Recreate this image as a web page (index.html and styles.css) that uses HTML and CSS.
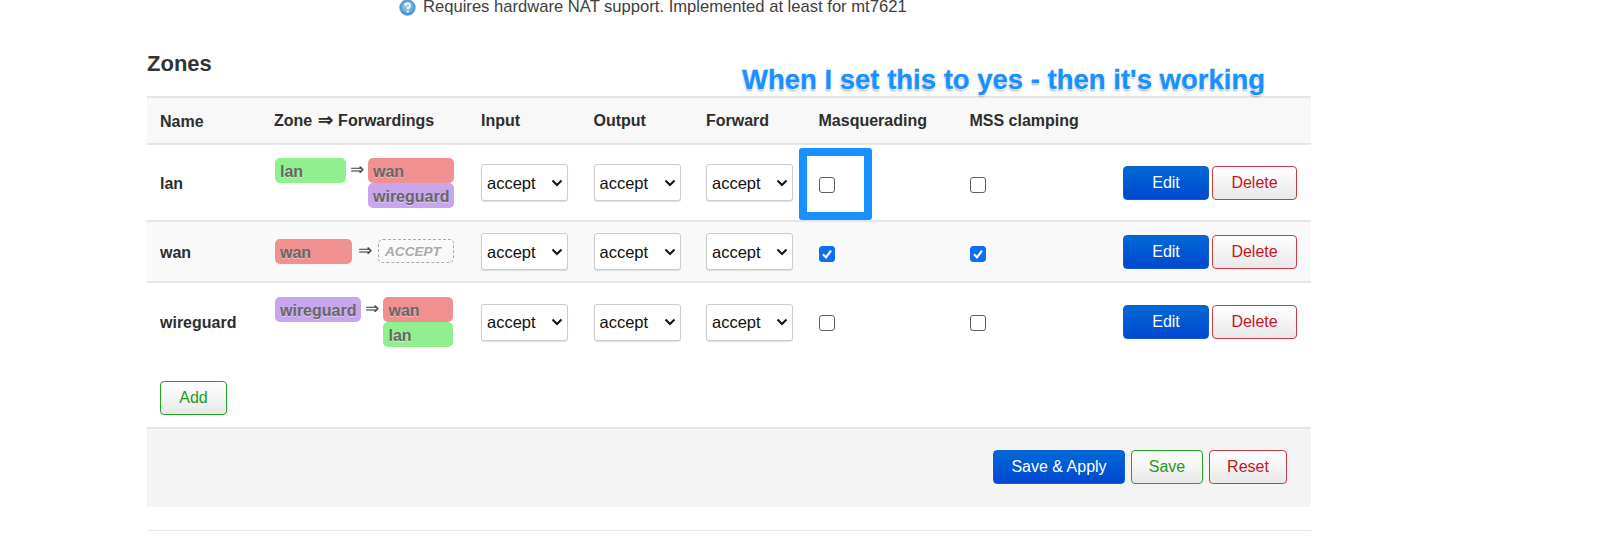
FILE: index.html
```html
<!DOCTYPE html>
<html lang="en">
<head>
<meta charset="utf-8">
<title>Zones</title>
<link rel="stylesheet" href="styles.css">
</head>
<body>
<div class="page">
  <p class="note">
    <svg class="help" viewBox="0 0 18 18" width="17" height="17" aria-hidden="true">
      <defs><radialGradient id="hg" cx="0.5" cy="0.45" r="0.6"><stop offset="0" stop-color="#b5d8f3"/><stop offset="0.65" stop-color="#5fa6df"/><stop offset="1" stop-color="#2b78bd"/></radialGradient></defs>
      <circle cx="9" cy="9" r="8.2" fill="url(#hg)" stroke="#4d8fc7" stroke-width="0.8"/>
      <path d="M6.4 7.1c0-1.6 1.2-2.5 2.7-2.5s2.6.9 2.6 2.2c0 1.9-2.4 1.9-2.4 3.8" fill="none" stroke="#fff" stroke-width="1.9"/>
      <circle cx="9.3" cy="13.3" r="1.2" fill="#fff"/>
    </svg>
    <span>Requires hardware NAT support. Implemented at least for mt7621</span>
  </p>
  <h3 class="title">Zones</h3>
  <table class="zones">
    <colgroup>
      <col class="c-name"><col class="c-zone"><col class="c-pol"><col class="c-pol"><col class="c-pol"><col class="c-masq"><col class="c-mss"><col>
    </colgroup>
    <thead>
      <tr><th class="low">Name</th><th>Zone <span class="th-arrow">⇒</span> Forwardings</th><th>Input</th><th>Output</th><th>Forward</th><th>Masquerading</th><th>MSS clamping</th><th></th></tr>
    </thead>
    <tbody>
      <tr class="r1">
        <td class="name">lan</td>
        <td>
          <div class="fw">
            <span class="z lan grow">lan</span><span class="arrow">⇒</span>
            <span class="stack w86"><span class="z wan">wan</span><span class="z wg">wireguard</span></span>
          </div>
        </td>
        <td><select><option>accept</option></select></td>
        <td><select><option>accept</option></select></td>
        <td><select><option>accept</option></select></td>
        <td><input type="checkbox"></td>
        <td><input type="checkbox"></td>
        <td><div class="acts"><button class="btn primary">Edit</button><button class="btn red">Delete</button></div></td>
      </tr>
      <tr class="r2">
        <td class="name">wan</td>
        <td>
          <div class="fw">
            <span class="z wan grow">wan</span><span class="arrow a2">⇒</span>
            <span class="z accept">ACCEPT</span>
          </div>
        </td>
        <td><select><option>accept</option></select></td>
        <td><select><option>accept</option></select></td>
        <td><select><option>accept</option></select></td>
        <td><input type="checkbox" checked></td>
        <td><input type="checkbox" checked></td>
        <td><div class="acts"><button class="btn primary">Edit</button><button class="btn red">Delete</button></div></td>
      </tr>
      <tr class="r3">
        <td class="name">wireguard</td>
        <td>
          <div class="fw">
            <span class="z wg">wireguard</span><span class="arrow">⇒</span>
            <span class="stack w70"><span class="z wan">wan</span><span class="z lan">lan</span></span>
          </div>
        </td>
        <td><select><option>accept</option></select></td>
        <td><select><option>accept</option></select></td>
        <td><select><option>accept</option></select></td>
        <td><input type="checkbox"></td>
        <td><input type="checkbox"></td>
        <td><div class="acts"><button class="btn primary">Edit</button><button class="btn red">Delete</button></div></td>
      </tr>
    </tbody>
  </table>
  <div class="add-row"><button class="btn green add">Add</button></div>
  <div class="footer">
    <button class="btn primary apply">Save &amp; Apply</button>
    <button class="btn green save">Save</button>
    <button class="btn red reset">Reset</button>
  </div>
  <div class="rule"></div>
  <div class="callout">When I set this to yes - then it's working</div>
  <div class="mark"></div>
</div>
</body>
</html>
```
FILE: styles.css
```css
* { box-sizing: border-box; }
html, body { margin: 0; background: #fff; }
body {
  font-family: "Liberation Sans", Arial, sans-serif;
  font-size: 16px;
  color: #333;
  height: 537px;
  overflow: hidden;
}
.page { position: relative; margin-left: 147px; width: 1164px; }
.note {
  margin: 0 0 0 252px;
  height: 15px;
  line-height: 13px;
  display: flex;
  align-items: flex-start;
  gap: 7px;
  font-size: 16.6px;
  color: #404040;
  white-space: nowrap;
}
.help { flex: none; margin-top: -1px; }
.title {
  margin: 36px 0 0;
  height: 45px;
  font-size: 22px;
  line-height: 26px;
  font-weight: 700;
  color: #333;
}
.zones { width: 1164px; border-collapse: separate; border-spacing: 0; table-layout: fixed; }
.c-name { width: 127px; }
.c-zone { width: 207px; }
.c-pol { width: 112.5px; }
.c-masq { width: 151px; }
.c-mss { width: 153.5px; }
.zones th {
  height: 49px;
  padding: 0;
  text-align: left;
  font-size: 16px;
  font-weight: 700;
  color: #2e2e2e;
  background: #f8f8f8;
  border-top: 2px solid #e6e6e6;
  border-bottom: 2px solid #e6e6e6;
  white-space: nowrap;
}
.zones th.low { padding: 3px 0 0 13px; }
.th-arrow { display: inline-block; width: 15px; font-size: 18px; line-height: 16px; text-align: center; margin: 0 1px; }
.zones td { padding: 0; vertical-align: middle; }
.r1 td { height: 77px; border-bottom: 2px solid #e6e6e6; }
.r2 td { height: 61px; border-bottom: 2px solid #e6e6e6; background: #f9f9f9; }
.r3 td { height: 78px; }
.zones td.name { padding: 2px 0 0 13px; font-weight: 700; font-size: 16px; color: #2e2e2e; }
.fw { display: flex; align-items: flex-start; width: 180px; padding-left: 1px; }
.z {
  display: block;
  height: 25px;
  line-height: 27px;
  padding: 0 5px;
  border-radius: 5px;
  font-weight: 700;
  font-size: 16px;
  color: #666;
  text-shadow: 0 1px 0 rgba(255,255,255,.45);
  white-space: nowrap;
}
.grow { flex: 1; }
.lan { background: #90f090; }
.wan { background: #f09090; }
.wg { background: #c8a6ec; }
.arrow { flex: none; width: 22px; text-align: center; font-size: 17px; line-height: 24px; color: #444; }
.a2 { width: 26px; }
.stack { flex: none; display: flex; flex-direction: column; }
.w86 { width: 86px; }
.w70 { width: 69.5px; }
.accept {
  flex: none;
  width: 76px;
  height: 24px;
  line-height: 24px;
  padding: 0 6px;
  border: 1px dashed #aaa;
  background: transparent;
  color: #aaa;
  font-style: italic;
  font-size: 13.6px;
}
select {
  display: block;
  appearance: none;
  -webkit-appearance: none;
  width: 87px;
  height: 37px;
  padding: 0 0 0 5px;
  border: 1px solid #ccc;
  border-radius: 3px;
  box-shadow: 0 1px 1px rgba(0,0,0,.12);
  background-color: #fff;
  background-image: url("data:image/svg+xml,%3Csvg xmlns='http://www.w3.org/2000/svg' width='12' height='8' viewBox='0 0 12 8'%3E%3Cpath d='M1.5 1.5 6 6l4.5-4.5' fill='none' stroke='%23111' stroke-width='2'/%3E%3C/svg%3E");
  background-repeat: no-repeat;
  background-position: right 4px center;
  font-family: inherit;
  font-size: 16.5px;
  color: #111;
}
input[type=checkbox] {
  display: block;
  appearance: none;
  -webkit-appearance: none;
  width: 16px;
  height: 16px;
  margin: 5px 0 0;
  border: 1px solid #5f5f5f;
  border-radius: 3px;
  background: #fff;
}
input[type=checkbox]:checked {
  border-color: #0b6ff0;
  background-color: #0b6ff0;
  background-image: url("data:image/svg+xml,%3Csvg xmlns='http://www.w3.org/2000/svg' width='14' height='14' viewBox='0 0 14 14'%3E%3Cpath d='M3 7.2 6 10.4 11 3.6' fill='none' stroke='%23fff' stroke-width='2.2'/%3E%3C/svg%3E");
  background-repeat: no-repeat;
  background-position: center;
}
.r3 input[type=checkbox] { margin-top: 2px; }
.acts { display: flex; gap: 3px; }
.r3 .acts { margin-top: -1px; }
.btn {
  height: 34px;
  border-radius: 4px;
  font-family: inherit;
  font-size: 16px;
  padding: 0;
  cursor: pointer;
}
.primary {
  color: #fff;
  border: 1px solid #0f5fc8;
  background: linear-gradient(#0069d6, #0048d0);
}
.red {
  color: #c8151b;
  border: 1px solid #d0393f;
  background: linear-gradient(#fff, #e8e8e8);
}
.green {
  color: #1a9c1f;
  border: 1px solid #1ea524;
  background: linear-gradient(#fff, #e8e8e8);
}
.acts .primary { width: 86px; }
.acts .red { width: 85px; }
.add-row { padding: 20px 0 0 13px; height: 68px; border-bottom: 2px solid #e6e6e6; }
.add { width: 67px; display: block; }
.footer {
  height: 78px;
  background: #f4f4f4;
  display: flex;
  justify-content: flex-end;
  gap: 6px;
  padding: 21px 24px 0 0;
}
.apply { width: 132px; }
.save { width: 72px; }
.reset { width: 78px; }
.rule { margin-top: 23px; border-top: 1px solid #e6e6e6; }
.callout {
  position: absolute;
  left: 595px;
  top: 64px;
  font-size: 27.5px;
  line-height: 32px;
  font-weight: 700;
  color: #1890ff;
  white-space: nowrap;
  -webkit-text-stroke: 0.3px #1890ff;
  text-shadow: 0 0 2px #fff, 1px 1px 1px #fff, 0 2px 2px #aaa;
}
.mark {
  position: absolute;
  left: 652px;
  top: 148px;
  width: 73px;
  height: 72px;
  border: 8px solid #1890ff;
  border-radius: 3px;
}
```
